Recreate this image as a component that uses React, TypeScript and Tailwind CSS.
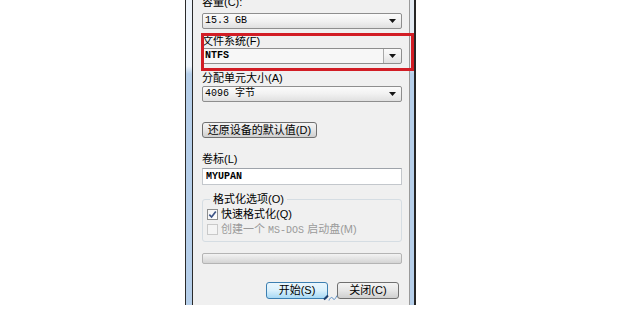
import React from 'react';

const ui = "font-['Liberation_Sans','Noto_Sans_CJK_SC',sans-serif]";
const mono = "font-['Liberation_Mono','Noto_Sans_CJK_SC',monospace]";

function Arrow() {
  return (
    <svg width="7" height="4" viewBox="0 0 7 4">
      <path d="M0 0h7L3.5 4z" fill="#151515" />
    </svg>
  );
}

function Combo({ value, split, bold }: { value: string; split?: boolean; bold?: boolean }) {
  return (
    <div className="h-[16px] flex border border-[#8e8e8e] rounded-[2px] bg-linear-to-b from-[#fbfbfb] via-[#f1f1f1] to-[#e0e0e0]">
      <div
        className={`flex-1 flex items-center pl-[2px] text-[10px] leading-none text-black ${mono} ${bold ? 'font-bold' : ''} ${split ? 'bg-[#f7f7f7] border-r border-[#a9a9a9]' : ''}`}
      >
        {value}
      </div>
      <div className="w-[17px] flex items-center justify-center">
        <Arrow />
      </div>
    </div>
  );
}

function Label({ children, className = '' }: { children: React.ReactNode; className?: string }) {
  return <div className={`h-[14px] flex items-center text-[11px] leading-none text-black ${ui} ${className}`}>{children}</div>;
}

export default function App() {
  return (
    <div className="w-[620px] h-[309px] bg-white overflow-hidden">
      <div className="relative ml-[185px] w-[231px] h-[305px] flex">
        {/* left frame */}
        <div className="w-[8px] border-x border-[#2b2b2b] bg-[linear-gradient(to_bottom,#eef4fb_0px,#eef4fb_66px,#b6cfea_74px,#b6cfea_100%)]" />

        {/* dialog body */}
        <div className="w-[216px] bg-[#f0f0f0] pl-[9px] pr-[7px] overflow-hidden">
          <Label className="-mt-[5px]">容量(C):</Label>
          <div className="mt-[4px]">
            <Combo value="15.3 GB" />
          </div>

          <Label className="mt-[5px]">文件系统(F)</Label>
          <Combo value="NTFS" split bold />

          <Label className="mt-[7px]">分配单元大小(A)</Label>
          <div className="mt-[1px]">
            <Combo value="4096 字节" />
          </div>

          <button className={`mt-[20px] h-[16px] w-[115px] flex items-center justify-center border border-[#707070] rounded-[3px] bg-linear-to-b from-[#f4f4f4] via-[#e6e6e6] to-[#cfcfcf] text-[11px] leading-none text-black ${ui}`}>
            还原设备的默认值(D)
          </button>

          <Label className="mt-[14px]">卷标(L)</Label>
          <div className={`mt-[2px] h-[17px] flex items-center pl-[3px] bg-white border border-[#c3c7cc] border-t-[#9ea3aa] text-[10px] font-bold leading-none text-black ${mono}`}>
            MYUPAN
          </div>

          <fieldset className="mt-[7px] border border-[#d5dde3] rounded-[3px] pl-[4px] pb-[5px]">
            <legend className={`ml-[3px] px-[3px] text-[11px] leading-[14px] text-black ${ui}`}>格式化选项(O)</legend>
            <div className="mt-[2px] h-[13px] flex items-center gap-[3px]">
              <div className="w-[11px] h-[11px] border border-[#8e8f8f] bg-linear-to-br from-[#f4f4f4] to-[#ffffff] flex items-center justify-center">
                <svg width="9" height="9" viewBox="0 0 9 9">
                  <path d="M1.3 4.6 3.6 7 7.8 1.6" fill="none" stroke="#3d5486" strokeWidth="1.7" />
                </svg>
              </div>
              <span className={`text-[11px] leading-none text-black ${ui}`}>快速格式化(Q)</span>
            </div>
            <div className="mt-[2px] h-[13px] flex items-center gap-[3px]">
              <div className="w-[11px] h-[11px] border border-[#c9c9c9] bg-[#f4f4f4]" />
              <span className={`text-[11px] leading-none text-[#9a9a9a] ${ui}`}>
                创建一个 <span className={`text-[10px] ${mono}`}>MS-DOS</span> 启动盘(M)
              </span>
            </div>
          </fieldset>

          <div className="mt-[11px] h-[11px] border border-[#b4b4b4] rounded-[2px] bg-linear-to-b from-[#f3f3f3] via-[#e4e4e4] to-[#d4d4d4]" />

          <div className="mt-[18px] flex justify-end gap-[9px] pr-[3px]">
            <button className={`relative w-[62px] h-[17px] flex items-center justify-center border border-[#3c7fb1] rounded-[3px] bg-linear-to-b from-[#eaf6fd] via-[#d9f0fc] to-[#a7d9f5] text-[11px] leading-none text-black ${ui}`}>
              开始(S)
              <svg className="absolute -right-[12px] -bottom-[3px]" width="16" height="8" viewBox="0 0 16 8">
                <path d="M1 6.5 5 2.5" stroke="#1d3f6e" strokeWidth="2" />
                <path d="M6 7.5c1-3 3-4 4-2s2 1 4-3" fill="none" stroke="#4d86c2" strokeWidth="0.9" />
              </svg>
            </button>
            <button className={`w-[62px] h-[17px] flex items-center justify-center border border-[#707070] rounded-[3px] bg-linear-to-b from-[#f4f4f4] via-[#e6e6e6] to-[#cfcfcf] text-[11px] leading-none text-black ${ui}`}>
              关闭(C)
            </button>
          </div>
        </div>

        {/* right frame */}
        <div className="w-[7px] border-l border-[#9a9a9a] border-r-2 border-r-[#262626] bg-[linear-gradient(to_bottom,#e4ebf3_0px,#e4ebf3_66px,#b6cfea_74px,#b6cfea_100%)]" />

        {/* red highlight annotation */}
        <div className="absolute left-[16px] top-[33px] w-[213px] h-[38px] border-[3px] border-[#d21d25]" />
      </div>
    </div>
  );
}
